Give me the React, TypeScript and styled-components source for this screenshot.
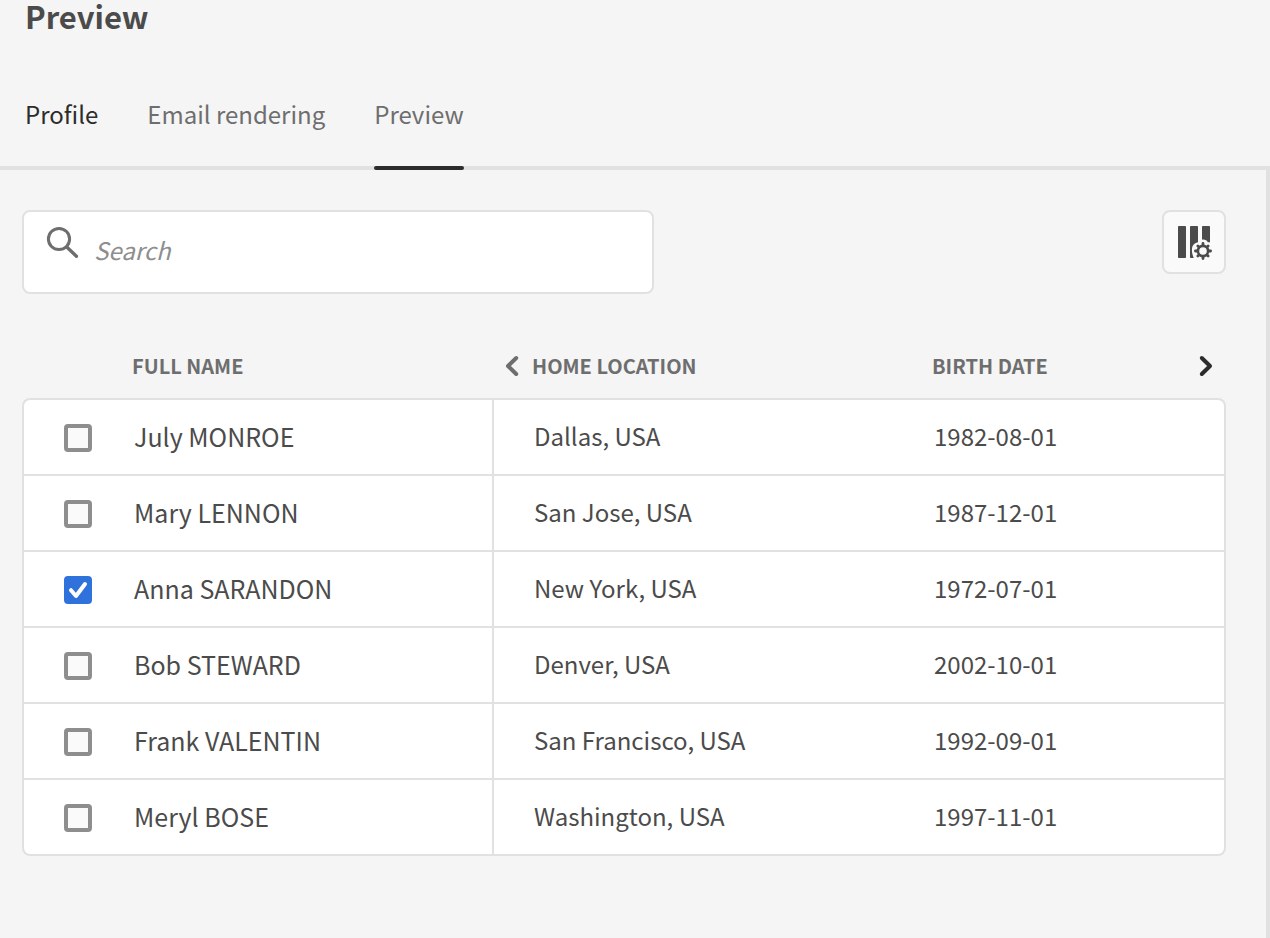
import React, { useState } from "react";
import styled, { createGlobalStyle } from "styled-components";

const color = {
  page: "#f5f5f5",
  line: "#e1e1e1",
  surface: "#ffffff",
  control: "#fafafa",
  text: "#4b4b4b",
  strong: "#2c2c2c",
  muted: "#6e6e6e",
  placeholder: "#8e8e8e",
  accent: "#2f72dc",
};

const GlobalStyle = createGlobalStyle`
  *, *::before, *::after { box-sizing: border-box; }
  body {
    margin: 0;
    background: ${color.page};
    color: ${color.text};
    font-family: "Noto Sans CJK SC", "Noto Sans", sans-serif;
    font-size: 24px;
    line-height: 40px;
  }
  button, input { font: inherit; color: inherit; }
`;

const Page = styled.main`
  display: flex;
  flex-direction: column;
  min-height: 100vh;
`;

const Title = styled.h1`
  margin: 0;
  padding: 0 25px;
  font-size: 31px;
  line-height: 32px;
  font-weight: 700;
`;

const TabList = styled.div`
  display: flex;
  gap: 49px;
  padding: 62px 25px 0;
`;

const Tab = styled.button<{ $tone: string; $current: boolean }>`
  margin: 0 0 -4px;
  padding: 0;
  border: 0;
  background: none;
  color: ${(p) => p.$tone};
  cursor: pointer;
  z-index: 1;

  &::after {
    content: "";
    display: block;
    height: 4px;
    margin-top: 32px;
    border-radius: 2px;
    background: ${(p) => (p.$current ? color.strong : "transparent")};
  }
`;

const Panel = styled.section`
  flex: 1;
  padding: 40px 40px 40px 22px;
  border-top: 4px solid ${color.line};
  border-right: 4px solid ${color.line};
`;

const Toolbar = styled.div`
  display: flex;
  justify-content: space-between;
  align-items: flex-start;
  gap: 24px;
`;

const SearchBox = styled.label`
  display: flex;
  align-items: flex-start;
  gap: 14px;
  flex: 0 1 632px;
  height: 84px;
  padding: 14px 22px;
  border: 2px solid ${color.line};
  border-radius: 8px;
  background: ${color.surface};
`;

const SearchInput = styled.input`
  flex: 1;
  min-width: 0;
  height: 46px;
  padding: 0;
  border: 0;
  outline: 0;
  background: none;

  &::placeholder {
    color: ${color.placeholder};
    font-style: italic;
    opacity: 1;
  }
`;

const IconButton = styled.button`
  display: grid;
  place-items: center;
  width: 64px;
  height: 64px;
  padding: 0;
  border: 2px solid ${color.line};
  border-radius: 8px;
  background: ${color.control};
  cursor: pointer;
`;

const Table = styled.table`
  width: 100%;
  margin-top: 40px;
  border-spacing: 0;
  table-layout: fixed;
`;

const Column = styled.col<{ $width?: number }>`
  width: ${(p) => (p.$width ? `${p.$width}px` : "auto")};
`;

const HeadCell = styled.th<{ $indent?: boolean }>`
  height: 64px;
  padding: 0 12px 0 ${(p) => (p.$indent ? "38px" : "0")};
  color: ${color.muted};
  font-size: 20px;
  line-height: 24px;
  font-weight: 700;
  text-align: left;
  text-transform: uppercase;
`;

const HeadContent = styled.div<{ $back?: boolean }>`
  display: flex;
  align-items: center;
  justify-content: ${(p) => (p.$back ? "flex-start" : "space-between")};
  gap: 12px;
  margin-left: ${(p) => (p.$back ? "-28px" : "0")};
`;

const ScrollButton = styled.button<{ $tone: string }>`
  display: flex;
  padding: 0;
  border: 0;
  background: none;
  color: ${(p) => p.$tone};
  cursor: pointer;
`;

const Cell = styled.td<{ $indent?: boolean }>`
  height: 76px;
  padding: 0 0 2px ${(p) => (p.$indent ? "40px" : "2px")};
  border: 0 solid ${color.line};
  border-bottom-width: 2px;
  background: ${color.surface};

  &:last-child { border-right-width: 2px; }
  tr:first-child > & { height: 78px; border-top-width: 2px; }
  tr:first-child > &:first-child { border-top-left-radius: 8px; }
  tr:first-child > &:last-child { border-top-right-radius: 8px; }
  tr:last-child > &:first-child { border-bottom-left-radius: 8px; }
  tr:last-child > &:last-child { border-bottom-right-radius: 8px; }
`;

const TickCell = styled(Cell)`
  padding: 2px 0 0 40px;
  border-left-width: 2px;
`;

const NameCell = styled(Cell)`
  border-right-width: 2px;
  font-size: 25px;
`;

const Tick = styled.span`
  display: grid;
  width: 28px;
  height: 28px;

  > * { grid-area: 1 / 1; }
  > svg { pointer-events: none; z-index: 1; }
`;

const TickInput = styled.input`
  appearance: none;
  width: 28px;
  height: 28px;
  margin: 0;
  border: 4px solid ${color.placeholder};
  border-radius: 4px;
  background: ${color.control};
  cursor: pointer;

  &:checked {
    border-color: ${color.accent};
    background: ${color.accent};
  }
`;

const SearchIcon = () => (
  <svg width="34" height="34" viewBox="0 0 34 34" fill="none" stroke={color.muted} aria-hidden="true">
    <circle cx="13" cy="13" r="10.6" strokeWidth="3" />
    <path d="M21 21.2 30.4 30.2" strokeWidth="3.4" strokeLinecap="round" />
  </svg>
);

const ColumnSettingsIcon = () => (
  <svg width="36" height="36" viewBox="0 0 36 36" fill={color.text} aria-hidden="true">
    <rect x="2" y="2" width="8" height="32" rx="0.8" />
    <rect x="14" y="2" width="8" height="32" rx="0.8" />
    <rect x="26" y="2" width="8" height="20" rx="0.8" />
    <path d="M17.6 36V33.500C16 30 15.400 26 16.400 22.500 17.500 19.500 20 18.600 22 18.200 23 16 24.500 15.400 27 15.400S31 16.400 31.800 18.200H36V36z" fill={color.control} />
    <circle cx="27" cy="27" r="5.100" fill="none" stroke={color.text} strokeWidth="2.600" />
    <g stroke={color.text} strokeWidth="2.800" strokeLinecap="round">
      <path d="M27 21.200v-1.800M27 32.800v1.800M21.200 27h-1.800M32.800 27h1.800M22.900 22.900l-1-1M31.100 22.900l1-1M22.900 31.100l-1 1M31.100 31.100l1 1" />
    </g>
  </svg>
);

const Chevron = ({ left = false }: { left?: boolean }) => (
  <svg width="16" height="24" viewBox="0 0 16 24" fill="none" stroke="currentColor" aria-hidden="true">
    <path
      d={left ? "M12.200 4 4 12l8.200 8" : "M3.800 4 12 12l-8.200 8"}
      strokeWidth="4"
      strokeLinecap="round"
      strokeLinejoin="round"
    />
  </svg>
);

const CheckIcon = () => (
  <svg width="28" height="28" viewBox="0 0 28 28" fill="none" stroke="#fff" aria-hidden="true">
    <path d="M7 14.200 12 20 21 8" strokeWidth="4" strokeLinecap="round" strokeLinejoin="round" />
  </svg>
);

const tabs = [
  { label: "Profile", tone: color.strong, current: false },
  { label: "Email rendering", tone: color.muted, current: false },
  { label: "Preview", tone: color.muted, current: true },
];

const profiles = [
  { name: "July MONROE", location: "Dallas, USA", birth: "1982-08-01" },
  { name: "Mary LENNON", location: "San Jose, USA", birth: "1987-12-01" },
  { name: "Anna SARANDON", location: "New York, USA", birth: "1972-07-01" },
  { name: "Bob STEWARD", location: "Denver, USA", birth: "2002-10-01" },
  { name: "Frank VALENTIN", location: "San Francisco, USA", birth: "1992-09-01" },
  { name: "Meryl BOSE", location: "Washington, USA", birth: "1997-11-01" },
];

export default function App() {
  const [selected, setSelected] = useState<string[]>(["Anna SARANDON"]);
  const toggle = (name: string) =>
    setSelected((s) => (s.includes(name) ? s.filter((n) => n !== name) : [...s, name]));

  return (
    <Page>
      <GlobalStyle />
      <Title>Preview</Title>
      <TabList role="tablist">
        {tabs.map((t) => (
          <Tab key={t.label} type="button" role="tab" aria-selected={t.current} $tone={t.tone} $current={t.current}>
            {t.label}
          </Tab>
        ))}
      </TabList>
      <Panel>
        <Toolbar>
          <SearchBox>
            <SearchIcon />
            <SearchInput type="text" placeholder="Search" aria-label="Search" />
          </SearchBox>
          <IconButton type="button" aria-label="Configure columns">
            <ColumnSettingsIcon />
          </IconButton>
        </Toolbar>
        <Table>
          <colgroup>
            <Column $width={110} />
            <Column $width={362} />
            <Column $width={400} />
            <Column />
          </colgroup>
          <thead>
            <tr>
              <HeadCell as="td" />
              <HeadCell scope="col">Full name</HeadCell>
              <HeadCell scope="col" $indent>
                <HeadContent $back>
                  <ScrollButton type="button" aria-label="Previous columns" $tone={color.muted}>
                    <Chevron left />
                  </ScrollButton>
                  Home location
                </HeadContent>
              </HeadCell>
              <HeadCell scope="col" $indent>
                <HeadContent>
                  Birth date
                  <ScrollButton type="button" aria-label="Next columns" $tone={color.strong}>
                    <Chevron />
                  </ScrollButton>
                </HeadContent>
              </HeadCell>
            </tr>
          </thead>
          <tbody>
            {profiles.map((p) => {
              const checked = selected.includes(p.name);
              return (
                <tr key={p.name}>
                  <TickCell>
                    <Tick>
                      <TickInput
                        type="checkbox"
                        aria-label={`Select ${p.name}`}
                        checked={checked}
                        onChange={() => toggle(p.name)}
                      />
                      {checked && <CheckIcon />}
                    </Tick>
                  </TickCell>
                  <NameCell>{p.name}</NameCell>
                  <Cell $indent>{p.location}</Cell>
                  <Cell $indent>{p.birth}</Cell>
                </tr>
              );
            })}
          </tbody>
        </Table>
      </Panel>
    </Page>
  );
}
